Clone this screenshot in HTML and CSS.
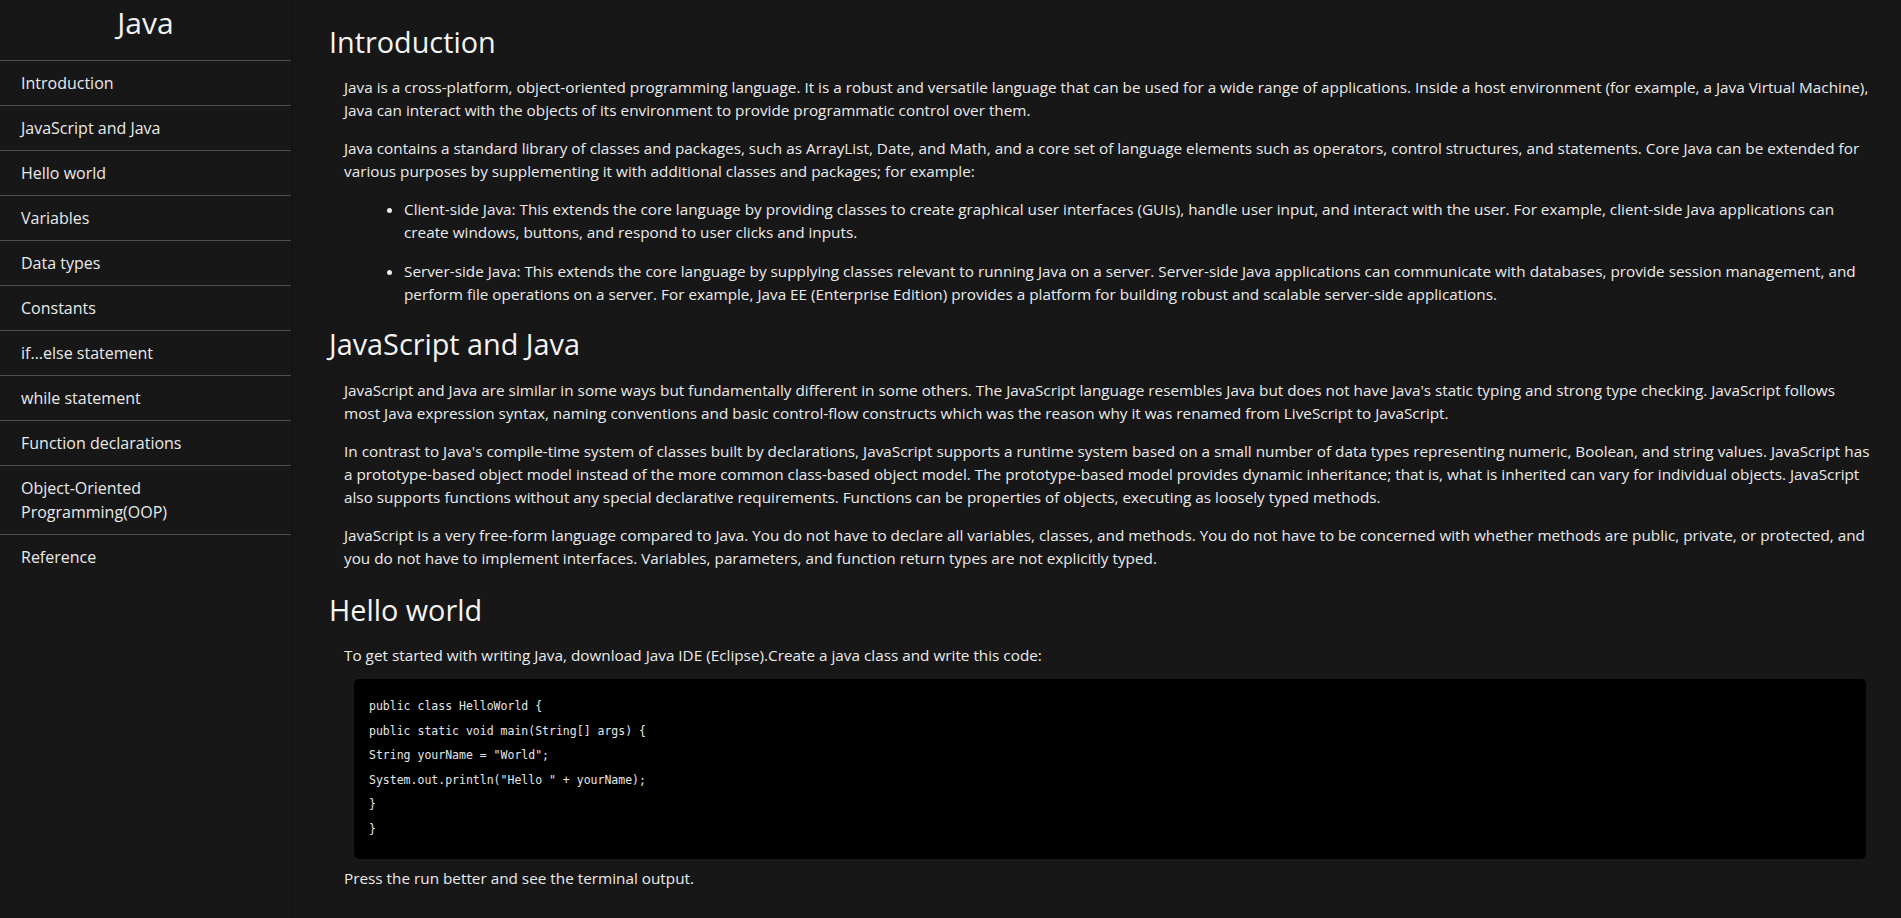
FILE: index.html
```html
<!DOCTYPE html>
<html lang="en">
<head>
<meta charset="utf-8">
<title>Java Documentation</title>
<link rel="stylesheet" href="styles.css">
</head>
<body>
<div class="page">
  <nav class="sidebar" id="navbar">
    <header class="sidebar-title">Java</header>
    <ul class="nav-list">
      <li><a class="nav-link" href="#Introduction">Introduction</a></li>
      <li><a class="nav-link" href="#JavaScript_and_Java">JavaScript and Java</a></li>
      <li><a class="nav-link" href="#Hello_world">Hello world</a></li>
      <li><a class="nav-link" href="#Variables">Variables</a></li>
      <li><a class="nav-link" href="#Data_types">Data types</a></li>
      <li><a class="nav-link" href="#Constants">Constants</a></li>
      <li><a class="nav-link" href="#if_else_statement">if...else statement</a></li>
      <li><a class="nav-link" href="#while_statement">while statement</a></li>
      <li><a class="nav-link" href="#Function_declarations">Function declarations</a></li>
      <li><a class="nav-link" href="#OOP">Object-Oriented Programming(OOP)</a></li>
      <li><a class="nav-link" href="#Reference">Reference</a></li>
    </ul>
  </nav>
  <main class="content" id="main-doc">
    <section class="main-section" id="Introduction">
      <header class="section-title">Introduction</header>
      <p>Java is a cross-platform, object-oriented programming language. It is a robust and versatile language that can be used for a wide range of applications. Inside a host environment (for example, a Java Virtual Machine), Java can interact with the objects of its environment to provide programmatic control over them.</p>
      <p>Java contains a standard library of classes and packages, such as ArrayList, Date, and Math, and a core set of language elements such as operators, control structures, and statements. Core Java can be extended for various purposes by supplementing it with additional classes and packages; for example:</p>
      <ul class="bullets">
        <li>Client-side Java: This extends the core language by providing classes to create graphical user interfaces (GUIs), handle user input, and interact with the user. For example, client-side Java applications can create windows, buttons, and respond to user clicks and inputs.</li>
        <li>Server-side Java: This extends the core language by supplying classes relevant to running Java on a server. Server-side Java applications can communicate with databases, provide session management, and perform file operations on a server. For example, Java EE (Enterprise Edition) provides a platform for building robust and scalable server-side applications.</li>
      </ul>
    </section>
    <section class="main-section" id="JavaScript_and_Java">
      <header class="section-title">JavaScript and Java</header>
      <p>JavaScript and Java are similar in some ways but fundamentally different in some others. The JavaScript language resembles Java but does not have Java's static typing and strong type checking. JavaScript follows most Java expression syntax, naming conventions and basic control-flow constructs which was the reason why it was renamed from LiveScript to JavaScript.</p>
      <p>In contrast to Java's compile-time system of classes built by declarations, JavaScript supports a runtime system based on a small number of data types representing numeric, Boolean, and string values. JavaScript has a prototype-based object model instead of the more common class-based object model. The prototype-based model provides dynamic inheritance; that is, what is inherited can vary for individual objects. JavaScript also supports functions without any special declarative requirements. Functions can be properties of objects, executing as loosely typed methods.</p>
      <p>JavaScript is a very free-form language compared to Java. You do not have to declare all variables, classes, and methods. You do not have to be concerned with whether methods are public, private, or protected, and you do not have to implement interfaces. Variables, parameters, and function return types are not explicitly typed.</p>
    </section>
    <section class="main-section" id="Hello_world">
      <header class="section-title">Hello world</header>
      <p class="lead-in">To get started with writing Java, download Java IDE (Eclipse).Create a java class and write this code:</p>
      <pre class="code"><code>public class HelloWorld {
public static void main(String[] args) {
String yourName = "World";
System.out.println("Hello " + yourName);
}
}</code></pre>
      <p>Press the run better and see the terminal output.</p>
    </section>
  </main>
</div>
</body>
</html>
```
FILE: styles.css
```css
* { box-sizing: border-box; }

html, body {
  margin: 0;
  padding: 0;
  height: 100%;
  background: #171717;
  color: #ebebeb;
  font-family: "Open Sans", "Noto Sans", sans-serif;
  font-size: 16px;
}

.page {
  display: flex;
  height: 100vh;
  overflow: hidden;
}

.sidebar {
  flex: 0 0 293px;
  height: 100%;
  border-right: 2px solid #0c1616;
  background: #171717;
}

.sidebar-title {
  font-size: 30px;
  line-height: 41px;
  text-align: center;
  color: #f2f2f2;
  padding: 2px 0 17px;
}

.nav-list {
  list-style: none;
  margin: 0;
  padding: 0;
}

.nav-list li {
  border-top: 1px solid #4e4e4e;
}

.nav-link {
  display: block;
  padding: 10px 21px;
  line-height: 24px;
  color: #eaeaea;
  text-decoration: none;
}

.content {
  flex: 1 1 auto;
  min-width: 0;
  padding: 21.5px 26px 0 36px;
  overflow: hidden;
}

.main-section + .main-section {
  padding-top: 4.5px;
}

.section-title {
  font-size: 28.8px;
  line-height: 39.2px;
  color: #f4f4f4;
  margin: 0 0 15.5px;
}

.main-section p {
  margin: 0 0 15px 15px;
  font-size: 15.3px;
  line-height: 23px;
}

.main-section p.lead-in {
  margin-bottom: 12px;
}

.bullets {
  margin: 0;
  padding: 0 0 0 75px;
  font-size: 15.3px;
}

.bullets li {
  line-height: 23px;
  margin: 0 0 15.6px;
}

.bullets li:last-child {
  margin-bottom: 14px;
}

.code {
  margin: 0 9px 8.4px 25px;
  padding: 15.2px 15px 17.6px;
  background: #000;
  border-radius: 5px;
  font-family: "DejaVu Sans Mono", "Liberation Mono", monospace;
  font-size: 11.5px;
  line-height: 24.5px;
  color: #e6e6e6;
  white-space: pre;
}

.code code {
  font-family: inherit;
}
```
